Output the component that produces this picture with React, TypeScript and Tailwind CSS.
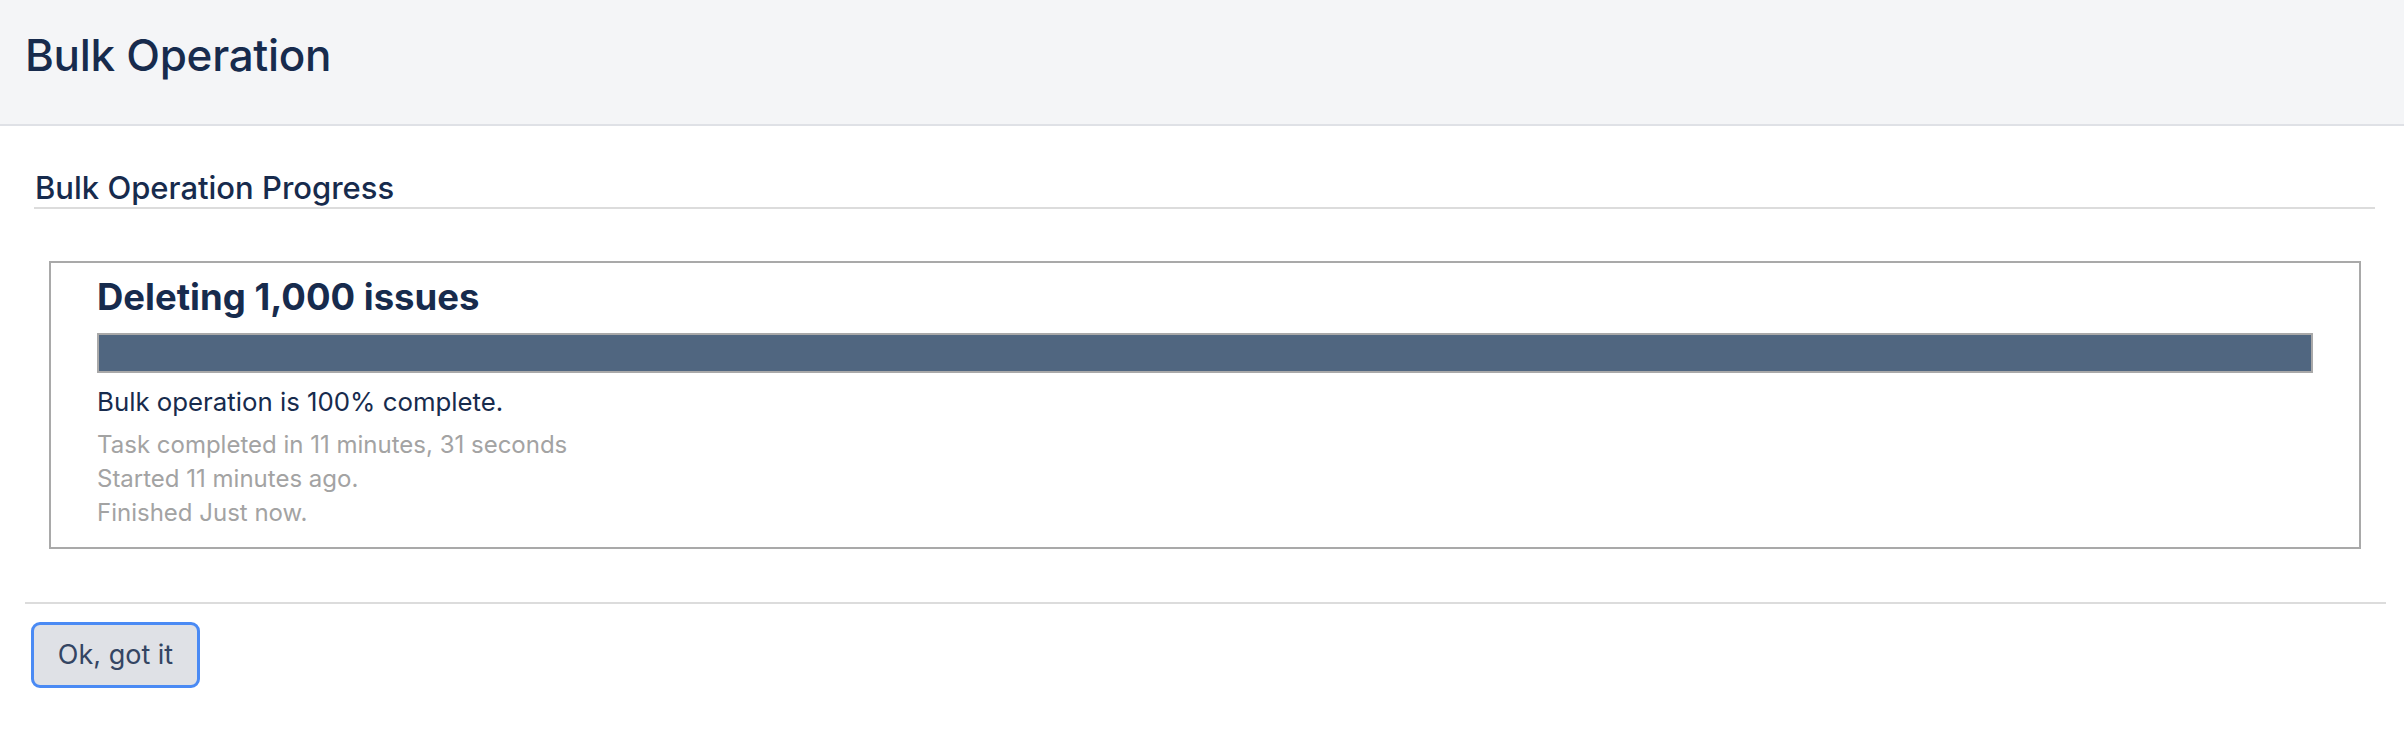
export default function App() {
  return (
    <div className="min-h-screen bg-white text-[#172b4d]" style={{ fontFamily: 'Inter, "Noto Sans", sans-serif' }}>
      <header className="h-[126px] bg-[#f4f5f7] border-b-2 border-[#dfe1e6] pl-[25px] pt-[33px]">
        <h1 className="text-[44px] leading-none font-medium tracking-[-0.3px]">Bulk Operation</h1>
      </header>

      <main className="pl-[25px] pr-[18px]">
        <div className="ml-[9px] mr-[11px] mt-[46px] border-b-2 border-[#dcdcdc] pb-[4px] pl-[1px]">
          <h2 className="text-[31px] leading-none font-medium">Bulk Operation Progress</h2>
        </div>

        <div className="ml-[24px] mr-[25px] mt-[52px] border-2 border-[#a9a9a9] pl-[46px] pr-[46px] pt-[16px] pb-[17px]">
          <h3 className="text-[36.5px] leading-none font-bold">Deleting 1,000 issues</h3>
          <div className="mt-[17px] h-[40px] border-2 border-[#a9a9a9] bg-[#506680]" />
          <p className="mt-[12px] text-[25.8px] leading-[34px]">Bulk operation is 100% complete.</p>
          <div className="mt-[9px] text-[24px] leading-[34px] text-[#a3a3a3]">
            <div>Task completed in 11 minutes, 31 seconds</div>
            <div>Started 11 minutes ago.</div>
            <div>Finished Just now.</div>
          </div>
        </div>

        <div className="mt-[53px] border-t-2 border-[#dcdcdc]" />

        <button className="ml-[6px] mt-[18px] w-[169px] h-[66px] rounded-[9px] border-[3px] border-[#4a8af4] bg-[#dfe1e6] text-[27px] text-[#344563] leading-none">
          Ok, got it
        </button>
      </main>
    </div>
  )
}
